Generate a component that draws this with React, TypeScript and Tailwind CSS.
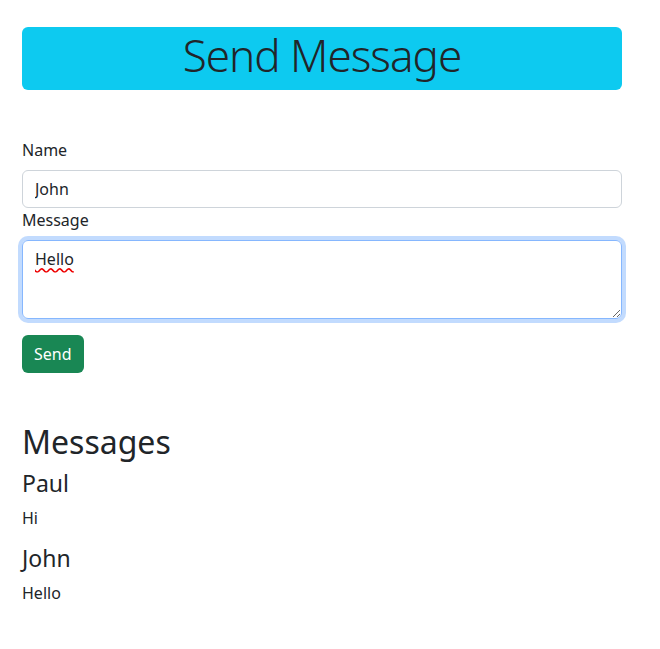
import { useEffect, useRef, useState } from "react";

type Msg = { name: string; text: string };

const INITIAL: Msg[] = [
  { name: "Paul", text: "Hi" },
  { name: "John", text: "Hello" },
];

export default function App() {
  const [name, setName] = useState("John");
  const [message, setMessage] = useState("Hello");
  const [messages, setMessages] = useState<Msg[]>(INITIAL);
  const areaRef = useRef<HTMLTextAreaElement>(null);

  useEffect(() => {
    const el = areaRef.current;
    if (!el) return;
    el.focus();
    el.setSelectionRange(el.value.length, el.value.length);
  }, []);

  const send = () => {
    if (!name || !message) return;
    setMessages((m) => [...m, { name, text: message }]);
    setMessage("");
  };

  return (
    <div className="min-h-[649px] bg-white font-['Noto_Sans',sans-serif] text-[#212529]">
      <div className="box-content w-[600px] pl-[22px] pt-[27px]">
        <h1 className="rounded-md bg-[#0dcaf0] pb-[6px] text-center text-[44px] leading-[57px] font-light tracking-[-1px]">
          Send Message
        </h1>

        <div className="mt-[48px]">
          <label className="mb-2 block text-base leading-6">Name</label>
          <input
            value={name}
            onChange={(e) => setName(e.target.value)}
            className="block h-[38px] w-full rounded-md border border-[#ced4da] px-3 text-base leading-6 outline-none"
          />
          <label className="mb-2 block text-base leading-6">Message</label>
          <textarea
            ref={areaRef}
            value={message}
            onChange={(e) => setMessage(e.target.value)}
            className="block h-[79px] w-full rounded-md border border-[#86b7fe] px-3 py-1.5 text-base leading-6 underline decoration-wavy decoration-[#e00] underline-offset-2 shadow-[0_0_0_4px_rgba(13,110,253,0.25)] outline-none"
          />
          <button
            type="button"
            onClick={send}
            className="mt-4 h-[38px] rounded-md bg-[#198754] px-3 text-base leading-6 text-white"
          >
            Send
          </button>
        </div>

        <h2 className="mt-[50px] mb-[9px] text-[32px] leading-[1.2]">Messages</h2>
        {messages.map((m, i) => (
          <div key={i}>
            <h4 className="text-[23px] leading-[1.2]">{m.name}</h4>
            <p className="mt-2 mb-[15px] text-base leading-6">{m.text}</p>
          </div>
        ))}
      </div>
    </div>
  );
}
